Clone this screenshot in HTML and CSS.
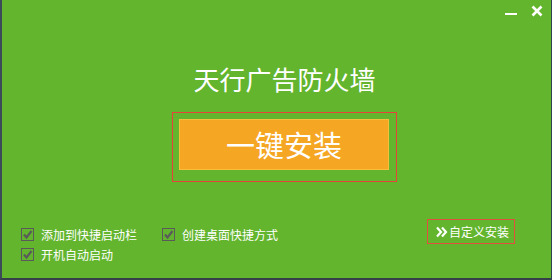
FILE: index.html
```html
<!DOCTYPE html>
<html lang="zh-CN">
  <head>
    <meta charset="UTF-8" />
    <meta name="viewport" content="width=device-width, initial-scale=1.0" />
    <title>天行广告防火墙</title>
    <link rel="stylesheet" href="styles.css">
  </head>
  <body>
    <div class="window">
      <!-- 标题栏 -->
      <div class="title-bar">
        <span class="btn-min">
          <svg width="14" height="4" viewBox="0 0 14 4"><rect x="1" y="1" width="12" height="2" fill="#fff"/></svg>
        </span>
        <span class="btn-close">
          <svg width="12" height="12" viewBox="0 0 12 12"><path d="M1.5 1.5 L10.5 10.5 M10.5 1.5 L1.5 10.5" stroke="#fff" stroke-width="2.6"/></svg>
        </span>
      </div>

      <div class="main">
        <h1 class="title">天行广告防火墙</h1>
        <div class="install-frame">
          <button type="button" class="btn-install">一键安装</button>
        </div>
      </div>

      <div class="bottom">
        <ul class="options">
          <li class="option">
            <span class="check">
              <svg width="11" height="11" viewBox="0 0 11 11"><path d="M2 5.5 L4.5 8.5 L9.5 2" fill="none" stroke="#5a5a5a" stroke-width="2.2"/></svg>
            </span>添加到快捷启动栏
          </li>
          <li class="option">
            <span class="check">
              <svg width="11" height="11" viewBox="0 0 11 11"><path d="M2 5.5 L4.5 8.5 L9.5 2" fill="none" stroke="#5a5a5a" stroke-width="2.2"/></svg>
            </span>创建桌面快捷方式
          </li>
          <li class="option">
            <span class="check">
              <svg width="11" height="11" viewBox="0 0 11 11"><path d="M2 5.5 L4.5 8.5 L9.5 2" fill="none" stroke="#5a5a5a" stroke-width="2.2"/></svg>
            </span>开机自动启动
          </li>
        </ul>
        <button type="button" class="btn-custom">
          <svg width="12" height="12" viewBox="0 0 12 12"><path d="M1 1.5 L5 6 L1 10.5 M6 1.5 L10 6 L6 10.5" fill="none" stroke="#fff" stroke-width="2.2"/></svg>自定义安装
        </button>
      </div>
    </div>
  </body>
</html>
```

FILE: styles.css
```css
body {
  margin: 0;
  font-family: "Noto Sans CJK SC", "Noto Sans", sans-serif;
}
.window {
  width: 552px;
  height: 280px;
  box-sizing: border-box;
  background: #62b52d;
  border-left: 2px solid #3b4b58;
  border-right: 1px solid #2e4150;
  border-bottom: 2px solid #34404a;
  display: flex;
  flex-direction: column;
}
.title-bar {
  height: 26px;
  display: flex;
  justify-content: flex-end;
  align-items: flex-start;
}
.btn-min {
  margin-top: 9px;
  margin-right: 13px;
  line-height: 0;
}
.btn-close {
  margin-top: 5px;
  margin-right: 8px;
  line-height: 0;
}
.main {
  display: flex;
  flex-direction: column;
  align-items: center;
  padding-left: 16px;
}
.title {
  margin: 38px 0 0 0;
  font-size: 26px;
  line-height: 30px;
  font-weight: normal;
  color: #fff;
}
.install-frame {
  margin-top: 18px;
  border: 1px solid #e8433a;
  padding: 6px 7px 11px 6px;
}
.btn-install {
  display: block;
  width: 210px;
  height: 51px;
  border: 1px solid #f8bd3a;
  background: #f5a623;
  color: #fff;
  font-family: inherit;
  font-size: 29px;
  line-height: 49px;
  padding: 0;
}
.bottom {
  margin-top: auto;
  display: flex;
  justify-content: space-between;
  align-items: flex-start;
  padding: 0 36px 14px 19px;
}
.options {
  list-style: none;
  margin: 0;
  padding: 5px 0 0 0;
  display: grid;
  grid-template-columns: 141px auto;
}
.option {
  display: flex;
  align-items: center;
  height: 20px;
  font-size: 12px;
  color: #fff;
}
.check {
  width: 11px;
  height: 11px;
  border: 1px solid #5a5a5a;
  margin-right: 7px;
  line-height: 0;
}
.btn-custom {
  display: flex;
  align-items: center;
  width: 88px;
  height: 25px;
  border: 1px solid #e0503c;
  background: transparent;
  color: #fff;
  font-family: inherit;
  font-size: 12px;
  padding: 0 0 0 8px;
}
.btn-custom svg {
  margin-right: 1px;
}
```
